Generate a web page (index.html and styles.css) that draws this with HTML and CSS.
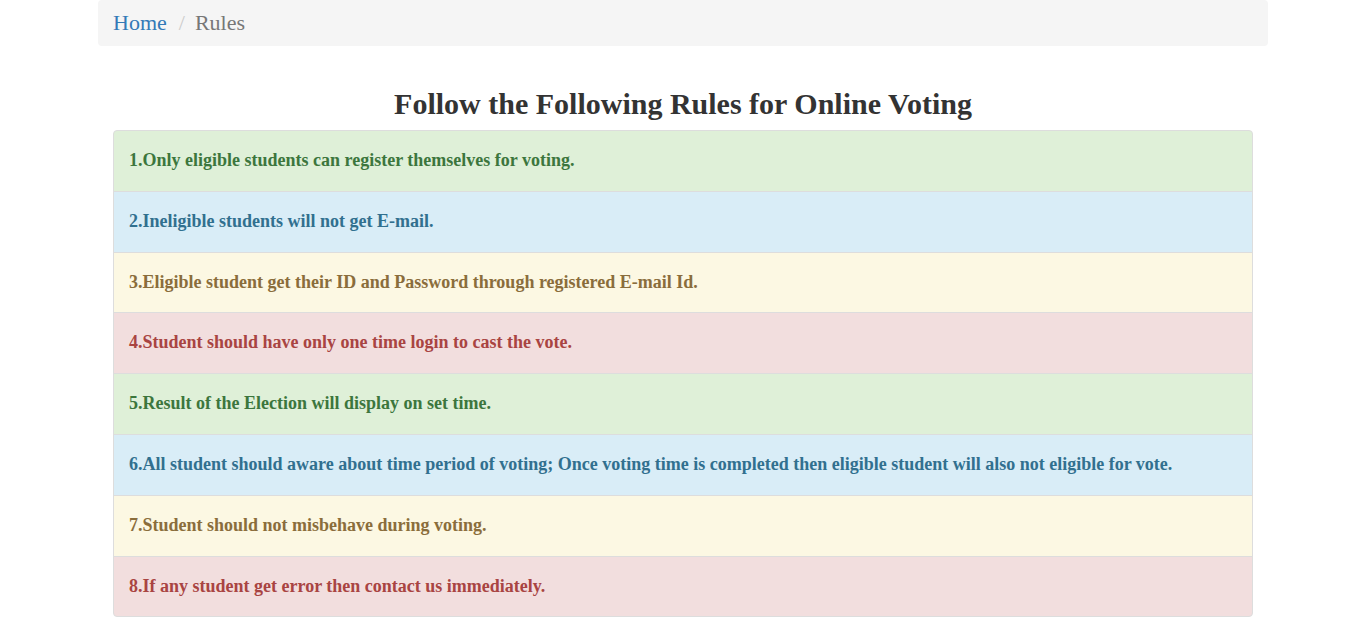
FILE: index.html
```html
<!DOCTYPE html>
<html>
<head>
<meta charset="utf-8">
<title>Rules</title>
<link rel="stylesheet" href="styles.css">
</head>
<body>
<div class="container">
  <ol class="breadcrumb">
    <li><a href="#">Home</a></li>
    <li class="active">Rules</li>
  </ol>
  <div class="content">
    <h2 class="title">Follow the Following Rules for Online Voting</h2>
    <ul class="list-group">
      <li class="item success"><h4>1.Only eligible students can register themselves for voting.</h4></li>
      <li class="item info"><h4>2.Ineligible students will not get E-mail.</h4></li>
      <li class="item warning"><h4>3.Eligible student get their ID and Password through registered E-mail Id.</h4></li>
      <li class="item danger"><h4>4.Student should have only one time login to cast the vote.</h4></li>
      <li class="item success"><h4>5.Result of the Election will display on set time.</h4></li>
      <li class="item info"><h4>6.All student should aware about time period of voting; Once voting time is completed then eligible student will also not eligible for vote.</h4></li>
      <li class="item warning"><h4>7.Student should not misbehave during voting.</h4></li>
      <li class="item danger"><h4>8.If any student get error then contact us immediately.</h4></li>
    </ul>
  </div>
</div>
</body>
</html>
```

FILE: styles.css
```css
* { box-sizing: border-box; }
html, body { margin: 0; padding: 0; background: #fff; }
body {
  font-family: "Liberation Serif", "Times New Roman", serif;
  font-size: 14px;
  line-height: 1.42857;
  color: #333;
}
.container {
  width: 1170px;
  margin: 0 auto;
}
.breadcrumb {
  list-style: none;
  margin: 0 0 20px;
  padding: 8px 15px;
  background: #f5f5f5;
  border-radius: 4px;
  font-size: 22px;
  line-height: 30px;
  height: 46px;
  display: flex;
  align-items: flex-end;
}
.breadcrumb li { color: #777; }
.breadcrumb li + li::before {
  content: "/";
  padding: 0 10px 0 12px;
  color: #ccc;
}
.breadcrumb a { color: #337ab7; text-decoration: none; }
.content { padding: 0 15px; }
.title {
  margin: 41px 0 10px;
  font-size: 30px;
  line-height: 1.1;
  font-weight: bold;
  text-align: center;
}
.list-group {
  list-style: none;
  margin: 0 0 20px;
  padding: 0;
}
.item {
  padding: 10px 15px;
  border: 1px solid #ddd;
  margin-bottom: -1px;
}
.item:first-child { border-radius: 4px 4px 0 0; }
.item:last-child { border-radius: 0 0 4px 4px; margin-bottom: 0; }
.item h4 {
  margin: 10px 0;
  font-size: 18px;
  line-height: 1.1;
  font-weight: bold;
}
.success { background: #dff0d8; color: #3c763d; }
.info { background: #d9edf7; color: #31708f; }
.warning { background: #fcf8e3; color: #8a6d3b; }
.danger { background: #f2dede; color: #a94442; }
```
